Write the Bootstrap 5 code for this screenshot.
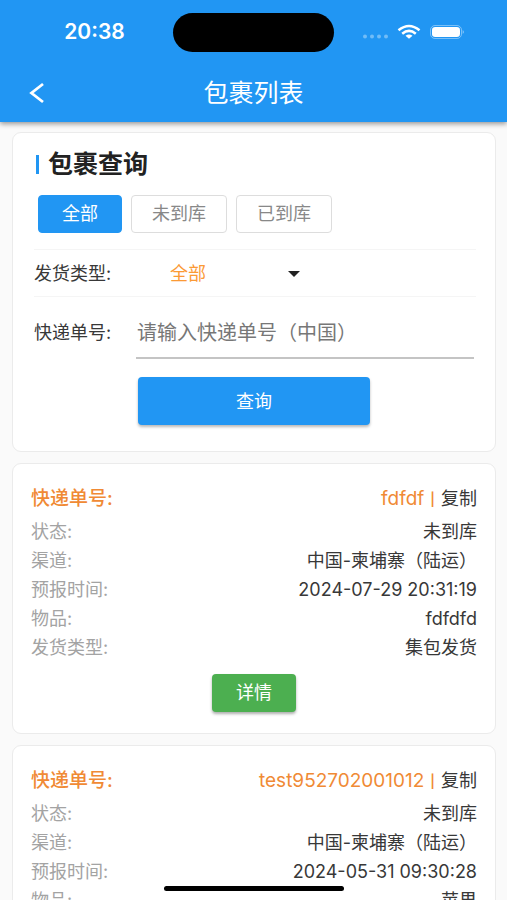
<!DOCTYPE html>
<html lang="zh-CN">
<head>
<meta charset="utf-8">
<meta name="viewport" content="width=device-width, initial-scale=1">
<title>包裹列表</title>
<link href="https://cdn.jsdelivr.net/npm/bootstrap@5.3.0/dist/css/bootstrap.min.css" rel="stylesheet">
<style>
  :root { --brand: #2196f3; --accent: #f08a35; --ink: #383838; }
  body { background: #fafafa; color: var(--ink); font-family: Inter, "Noto Sans CJK SC", sans-serif; font-size: 18px; line-height: 24px; }
  .app-header { background: var(--brand); color: #fff; box-shadow: 0 2px 5px rgba(0,0,0,.4); }
  .status-bar { height: 64px; }
  .status-side { flex: 1 1 0; }
  .clock { font-size: 21px; font-weight: 600; }
  .island { width: 161px; height: 39px; background: #000; }
  .title-bar { height: 58px; padding: 0 24px; }
  .title-bar h1 { font-size: 25px; font-weight: 400; line-height: 32px; }
  .title-side { width: 32px; }
  .page-body { padding: 10px 11px 0 12px; gap: 11px; }
  .panel { background: #fff; border: 1px solid #ebebeb; border-radius: 9px; }
  .search-panel { padding: 14px 19px 26px 21px; }
  .search-title { font-size: 25px; font-weight: 700; line-height: 34px; color: #222; gap: 9px; padding-left: 2px; }
  .title-rule { width: 3px; height: 19px; background: var(--brand); }
  .filter-row { gap: 9px; padding: 14px 4px 16px; }
  .btn-filter { --bs-btn-font-size: 18px; --bs-btn-line-height: 24px; --bs-btn-padding-x: 20px; --bs-btn-padding-y: 6px; --bs-btn-border-radius: 4px; --bs-btn-color: #888; --bs-btn-bg: #fff; --bs-btn-border-color: #ddd; --bs-btn-active-bg: var(--brand); --bs-btn-active-border-color: var(--brand); --bs-btn-active-color: #fff; }
  .btn-filter.active { padding-left: 23px; padding-right: 23px; }
  .type-row { height: 48px; padding-top: 2px; border-top: 1px solid #f5f5f5; border-bottom: 1px solid #f5f5f5; }
  .field-label { width: 102px; flex: none; }
  .type-select { width: 168px; padding: 0 34px; border: 0; color: #fb9a35; font-size: 18px; line-height: 24px; background-color: transparent; background-image: url("data:image/svg+xml,%3Csvg xmlns='http://www.w3.org/2000/svg' viewBox='0 0 12 6'%3E%3Cpath d='M0 0h12L6 6z' fill='%23222'/%3E%3C/svg%3E"); background-size: 12px 6px; background-position: right 4px center; }
  .number-row { padding: 10px 2px 0 0; }
  .number-input { border: 0; border-bottom: 2px solid #c4c4c4; border-radius: 0; padding: 11px 1px 9px; font-size: 20px; line-height: 30px; background: transparent; }
  .number-input::placeholder { color: #777; }
  .btn-search { --bs-btn-font-size: 18px; --bs-btn-color: #fff; --bs-btn-bg: var(--brand); --bs-btn-hover-bg: #1e88e5; --bs-btn-hover-color: #fff; --bs-btn-border-radius: 4px; margin: 18px 106px 0 104px; height: 48px; box-shadow: 0 2px 3px rgba(0,0,0,.28); }
  .record { padding: 17px 18px 21px; }
  .record-line { height: 29px; }
  .record-line dt { font-weight: 400; color: #a3a3a3; }
  .record-head { height: 36px; }
  .record-head dt, .record-no { color: var(--accent); }
  .record-head dt { font-size: 19px; font-weight: 500; }
  .record-no { font-size: 19px; }
  .record-bar { font-size: 13px; font-weight: 600; color: var(--accent); margin: 0 6px; }
  .btn-copy { --bs-btn-font-size: 18px; --bs-btn-color: var(--ink); --bs-btn-padding-x: 0; --bs-btn-padding-y: 0; --bs-btn-line-height: 24px; --bs-btn-border-width: 0; }
  .btn-detail { --bs-btn-font-size: 18px; --bs-btn-line-height: 24px; --bs-btn-color: #fff; --bs-btn-bg: #4caf50; --bs-btn-hover-bg: #43a047; --bs-btn-hover-color: #fff; --bs-btn-padding-x: 23px; --bs-btn-padding-y: 6px; --bs-btn-border-radius: 4px; margin-top: 12px; box-shadow: 0 2px 3px rgba(0,0,0,.32); }
  .home-bar { width: 180px; height: 5px; background: #000; margin-bottom: 9px; }
</style>
<script src="https://cdn.jsdelivr.net/npm/bootstrap@5.3.0/dist/js/bootstrap.bundle.min.js" defer></script>
</head>
<body>
<header class="app-header sticky-top">
  <div class="status-bar d-flex align-items-center">
    <div class="status-side text-center"><span class="clock ms-3">20:38</span></div>
    <div class="island rounded-pill"></div>
    <div class="status-side d-flex align-items-center justify-content-center">
      <svg class="me-3" width="104" height="16" viewBox="0 0 104 16" fill="#fff" aria-hidden="true">
        <g opacity=".36"><circle cx="4" cy="12.5" r="2"/><circle cx="11" cy="12.5" r="2"/><circle cx="18" cy="12.5" r="2"/><circle cx="25" cy="12.5" r="2"/></g>
        <g fill="none" stroke="#fff" stroke-width="2.6"><path d="M37.5 6.2Q48-2.2 58.5 6.2"/><path d="M41.2 9.7Q48 4.2 54.8 9.7"/></g>
        <path d="M44.5 11.7Q48 9.3 51.5 11.7L48 14.8z"/>
        <rect x="69.5" y="1.500" width="31" height="13" rx="4.500" fill="none" stroke="#fff" opacity=".4"/>
        <rect x="71" y="3" width="28" height="10" rx="3.200"/>
        <path d="M101.700 6Q104 8 101.700 10z" opacity=".5"/>
      </svg>
    </div>
  </div>
  <div class="title-bar d-flex align-items-center justify-content-between">
    <a href="#" class="title-side d-flex" aria-label="返回">
      <svg width="24" height="24" viewBox="0 0 24 24" fill="none" stroke="#fff" stroke-width="2.800"><path d="M19 3L7.500 12 19 21"/></svg>
    </a>
    <h1 class="m-0">包裹列表</h1>
    <span class="title-side"></span>
  </div>
</header>

<main class="page-body d-flex flex-column">
  <form class="panel search-panel">
    <h2 class="search-title d-flex align-items-center m-0"><span class="title-rule"></span>包裹查询</h2>
    <div class="filter-row d-flex">
      <button type="button" class="btn btn-filter active">全部</button>
      <button type="button" class="btn btn-filter">未到库</button>
      <button type="button" class="btn btn-filter">已到库</button>
    </div>
    <div class="type-row d-flex align-items-center">
      <label class="field-label" for="shipType">发货类型:</label>
      <select class="form-select type-select" id="shipType"><option>全部</option><option>集包发货</option></select>
    </div>
    <div class="number-row d-flex align-items-center">
      <label class="field-label" for="trackNo">快递单号:</label>
      <input class="form-control number-input" id="trackNo" type="text" placeholder="请输入快递单号（中国）">
    </div>
    <div class="d-grid"><button type="submit" class="btn btn-search">查询</button></div>
  </form>

  <article class="panel record">
    <dl class="m-0">
      <div class="record-head d-flex align-items-center justify-content-between"><dt>快递单号:</dt><dd class="m-0 d-flex align-items-center"><span class="record-no">fdfdf</span><span class="record-bar">|</span><button type="button" class="btn btn-copy">复制</button></dd></div>
      <div class="record-line d-flex align-items-center justify-content-between"><dt>状态:</dt><dd class="m-0">未到库</dd></div>
      <div class="record-line d-flex align-items-center justify-content-between"><dt>渠道:</dt><dd class="m-0">中国-柬埔寨（陆运）</dd></div>
      <div class="record-line d-flex align-items-center justify-content-between"><dt>预报时间:</dt><dd class="m-0">2024-07-29 20:31:19</dd></div>
      <div class="record-line d-flex align-items-center justify-content-between"><dt>物品:</dt><dd class="m-0">fdfdfd</dd></div>
      <div class="record-line d-flex align-items-center justify-content-between"><dt>发货类型:</dt><dd class="m-0">集包发货</dd></div>
    </dl>
    <div class="text-center"><button type="button" class="btn btn-detail">详情</button></div>
  </article>

  <article class="panel record">
    <dl class="m-0">
      <div class="record-head d-flex align-items-center justify-content-between"><dt>快递单号:</dt><dd class="m-0 d-flex align-items-center"><span class="record-no">test952702001012</span><span class="record-bar">|</span><button type="button" class="btn btn-copy">复制</button></dd></div>
      <div class="record-line d-flex align-items-center justify-content-between"><dt>状态:</dt><dd class="m-0">未到库</dd></div>
      <div class="record-line d-flex align-items-center justify-content-between"><dt>渠道:</dt><dd class="m-0">中国-柬埔寨（陆运）</dd></div>
      <div class="record-line d-flex align-items-center justify-content-between"><dt>预报时间:</dt><dd class="m-0">2024-05-31 09:30:28</dd></div>
      <div class="record-line d-flex align-items-center justify-content-between"><dt>物品:</dt><dd class="m-0">苹果</dd></div>
    </dl>
  </article>
</main>
<div class="fixed-bottom d-flex justify-content-center pe-none"><div class="home-bar rounded-pill"></div></div>
</body>
</html>
